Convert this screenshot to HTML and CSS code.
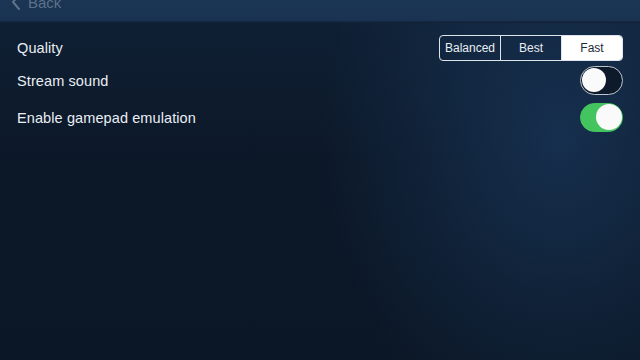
FILE: index.html
```html
<!DOCTYPE html>
<html lang="en">
<head>
    <meta charset="UTF-8">
    <title>Settings</title>
    <link rel="stylesheet" href="styles.css">
</head>
<body>
    <div class="topbar">
        <div class="back">
            <svg class="chev" width="10" height="16" viewBox="0 0 10 16"><path d="M8 1 L2 8 L8 15" fill="none" stroke="#5d7189" stroke-width="2" stroke-linecap="round" stroke-linejoin="round"/></svg>
            <span>Back</span>
        </div>
    </div>
    <div class="settings">
        <div class="row row-quality">
            <div class="label">Quality</div>
            <div class="seg">
                <div class="seg-item">Balanced</div>
                <div class="seg-item">Best</div>
                <div class="seg-item active">Fast</div>
            </div>
        </div>
        <div class="row row-sound">
            <div class="label">Stream sound</div>
            <div class="toggle"><div class="knob"></div></div>
        </div>
        <div class="row">
            <div class="label">Enable gamepad emulation</div>
            <div class="toggle on"><div class="knob"></div></div>
        </div>
    </div>
</body>
</html>
```
FILE: styles.css
```css
*{
    margin:0;
    padding:0;
    box-sizing:border-box;
}
html,body{
    width:640px;
    height:360px;
    overflow:hidden;
}
body{
    font-family:"Liberation Sans", Arial, sans-serif;
    color:#e9eef3;
    background:
        radial-gradient(ellipse 240px 300px at 560px 140px, rgba(28,62,102,0.6), rgba(28,62,102,0) 100%),
        linear-gradient(180deg, #0f2035 0%, #0c1828 45%, #0b1726 100%);
}
.topbar{
    height:23px;
    background:linear-gradient(180deg, #1b3555 0%, #1a3352 88%, #0f1e31 100%);
    overflow:hidden;
}
.back{
    display:flex;
    align-items:center;
    height:16px;
    margin-top:-6px;
    padding-left:11px;
    color:#5d7189;
    font-size:15px;
}
.chev{
    margin-right:7px;
}
.settings{
    display:flex;
    flex-direction:column;
    padding:10px 17px 0 17px;
}
.row{
    display:flex;
    align-items:center;
    justify-content:space-between;
    height:29px;
}
.row-quality{
    margin-bottom:4px;
}
.row-sound{
    margin-bottom:8px;
}
.label{
    font-size:14.5px;
    letter-spacing:0.1px;
}
.seg{
    display:flex;
    width:184px;
    height:26px;
    border:1px solid #dfe4ea;
    border-radius:4px;
    overflow:hidden;
}
.seg-item{
    flex:1;
    display:flex;
    align-items:center;
    justify-content:center;
    font-size:12px;
    color:#e9eef3;
    border-left:1px solid #dfe4ea;
}
.seg-item:first-child{
    border-left:none;
}
.seg-item.active{
    background:#ffffff;
    color:#1c2a3a;
}
.toggle{
    position:relative;
    width:43px;
    height:29px;
    border:1.5px solid #bfc5cc;
    border-radius:15px;
    background:#0d1a2b;
}
.toggle .knob{
    position:absolute;
    top:1px;
    left:1px;
    width:24px;
    height:24px;
    border-radius:50%;
    background:#fafafa;
}
.toggle.on{
    border-color:#44c45e;
    background:#44c45e;
}
.toggle.on .knob{
    left:auto;
    right:0;
    top:0;
    width:26px;
    height:26px;
}
```
